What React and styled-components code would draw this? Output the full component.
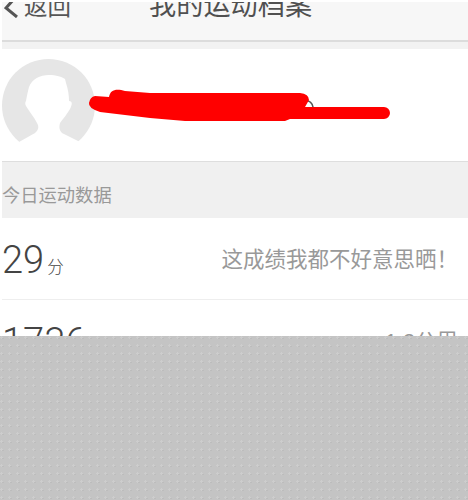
import React from "react";
import styled, { createGlobalStyle } from "styled-components";

const Global = createGlobalStyle`
  html, body { margin: 0; padding: 0; background: #fff; }
  body { font-family: "Liberation Sans", "Noto Sans CJK SC", sans-serif; }
`;

const Page = styled.div`
  position: relative;
  width: 468px;
  height: 500px;
  overflow: hidden;
  background: #fff;
  padding: 2px 0 0 2px;
  box-sizing: border-box;
`;

const NavBar = styled.header`
  height: 38px;
  background: #f7f7f7;
  border-bottom: 2px solid #dcdcdc;
  overflow: hidden;
  display: flex;
  color: #555;
`;

const BackLink = styled.div`
  display: flex;
  align-items: center;
  gap: 5px;
  height: 20px;
  width: 147px;
  flex: none;
  margin-top: -5px;
  padding-left: 2px;
  box-sizing: border-box;
  font-size: 23.5px;
  line-height: 30px;
`;

const Title = styled.h1`
  margin: -13px 0 0;
  font-size: 27.2px;
  line-height: 34px;
  font-weight: 400;
  color: #505050;
  white-space: nowrap;
`;

const Gap = styled.div`
  height: 7px;
  background: #f2f2f2;
`;

const Profile = styled.section`
  height: 113px;
  box-sizing: border-box;
  background: #fff;
  border-bottom: 1px solid #dedede;
  position: relative;
  display: flex;
  align-items: center;
  padding-top: 2px;
`;

const Scribble = styled.svg`
  position: absolute;
  left: 86px;
  top: 35px;
`;

const SectionTitle = styled.div`
  height: 56px;
  background: #f0f0f0;
  color: #999;
  font-size: 18.3px;
  line-height: 67px;
  overflow: hidden;
`;

const Row = styled.div`
  height: 81px;
  background: #fff;
  border-bottom: 1px solid #eeeeee;
  display: flex;
  align-items: center;
  justify-content: space-between;
  padding-right: 10px;
`;

const Value = styled.div`
  color: #444;
  font-family: Roboto, "Liberation Sans", sans-serif;
  font-size: 38px;
  font-weight: 300;
  display: flex;
  align-items: baseline;
  gap: 3px;
  margin-top: 3px;
`;

const Unit = styled.span`
  font-family: "Noto Sans CJK SC", sans-serif;
  font-size: 16.5px;
  color: #444;
`;

const Note = styled.div`
  font-size: 21.5px;
  color: #999;
  margin-top: -2px;
`;

const Overlay = styled.div`
  position: absolute;
  left: 0;
  right: 0;
  top: 336px;
  bottom: 0;
  background-color: #c4c4c4;
  background-image:
    radial-gradient(circle at 1.5px 1.5px, #cdcdcd 0 1px, transparent 1.2px),
    radial-gradient(circle at 3px 2.5px, #bcbcbc 0 0.8px, transparent 1px);
  background-size: 8px 8px;
`;

const App = () => (
  <Page>
    <Global />
    <NavBar>
      <BackLink>
        <svg width="15" height="22" viewBox="0 0 15 22" aria-hidden="true">
          <path d="M10 3 L2 12 L13 21" fill="none" stroke="#555" strokeWidth="3" />
        </svg>
        返回
      </BackLink>
      <Title>我的运动档案</Title>
    </NavBar>
    <Gap />
    <Profile>
      <svg width="94" height="94" viewBox="0 0 94 94" aria-hidden="true">
        <circle cx="46.5" cy="46.5" r="46.5" fill="#e6e6e6" />
        <path d="M24 42 C25 36 26 32 27 28 C30 20 38 16 47 16 C54 16 60 18 63 20 L64 24 C66 30 67 36 67 42 C71 42 70 46 68 50 C65 55 61 60 58 64 C57 68 57 71 60 74 L78 83 C62 103 32 103 17 83 L33 74 C37 71 37 67 35 64 C32 58 27 52 24 47 C23 45 23 43 24 42 Z" fill="#fff" />
      </svg>
      <Scribble width="304" height="40" viewBox="0 0 304 40" aria-hidden="true">
        <path d="M217 16 Q224 17 225 23" fill="none" stroke="#555" strokeWidth="1.5" />
        <path d="M7 12 L21 13 C22 6 28 4 37 7 L62 9 L212 9 Q221 10 221 16 L217 23 L296 23 A6 6 0 0 1 296 35 L202 35 L197 37 L97 37 L62 34 L12 28 Q0 24 1 19 Q2 13 7 12 Z" fill="#f00" />
      </Scribble>
    </Profile>
    <SectionTitle>今日运动数据</SectionTitle>
    <Row>
      <Value>29<Unit>分</Unit></Value>
      <Note>这成绩我都不好意思晒！</Note>
    </Row>
    <Row>
      <Value>1736</Value>
      <Note>1.2公里</Note>
    </Row>
    <Overlay />
  </Page>
);

export default App;
